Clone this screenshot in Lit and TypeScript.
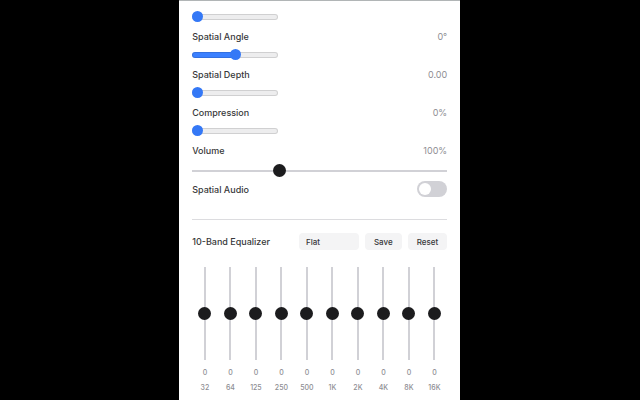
import { LitElement, html, css } from "lit";
import { customElement, property, state } from "lit/decorators.js";

interface Setting {
  id: string;
  label: string;
  min: number;
  max: number;
  step: number;
  value: number;
  format: (v: number) => string;
}

const SETTINGS: Setting[] = [
  { id: "angle", label: "Spatial Angle", min: -180, max: 180, step: 1, value: 0, format: (v) => `${v}°` },
  { id: "depth", label: "Spatial Depth", min: 0, max: 1, step: 0.01, value: 0, format: (v) => v.toFixed(2) },
  { id: "compression", label: "Compression", min: 0, max: 100, step: 1, value: 0, format: (v) => `${v}%` },
];

const BANDS = ["32", "64", "125", "250", "500", "1K", "2K", "4K", "8K", "16K"];

@customElement("blue-slider")
class BlueSlider extends LitElement {
  @property() label = "";
  @property({ type: Number }) min = 0;
  @property({ type: Number }) max = 100;
  @property({ type: Number }) step = 1;
  @property({ type: Number }) value = 0;

  static styles = css`
    :host {
      display: block;
      height: 11px;
    }
    .range {
      appearance: none;
      display: block;
      width: 86px;
      height: 11px;
      margin: 0;
      background: none;
    }
    .range::-webkit-slider-runnable-track {
      height: 6px;
      border-radius: 3px;
      box-shadow: inset 0 0 0 1px rgba(0, 0, 0, 0.12);
      background: linear-gradient(to right, #3b80ff var(--fill), #ededee var(--fill));
    }
    .range::-webkit-slider-thumb {
      appearance: none;
      width: 11px;
      height: 11px;
      margin-top: -3px;
      border-radius: 50%;
      background: #3478f6;
    }
  `;

  private onInput(e: Event) {
    this.value = Number((e.target as HTMLInputElement).value);
    this.dispatchEvent(new CustomEvent("change-value", { detail: this.value }));
  }

  render() {
    const fill = ((this.value - this.min) / (this.max - this.min)) * 100;
    return html`<input
      class="range"
      type="range"
      aria-label=${this.label}
      min=${this.min}
      max=${this.max}
      step=${this.step}
      .value=${String(this.value)}
      style="--fill: ${fill}%"
      @input=${this.onInput}
    />`;
  }
}

@customElement("app-root")
class AppRoot extends LitElement {
  @state() private values: Record<string, number> = Object.fromEntries(SETTINGS.map((s) => [s.id, s.value]));
  @state() private volume = 100;
  @state() private gains: number[] = BANDS.map(() => 0);

  static styles = css`
    :host {
      display: block;
      box-sizing: border-box;
      min-height: 100vh;
      padding: 0 28.1% 0 28%;
      background: #000;
      font-family: Inter, "Liberation Sans", sans-serif;
      font-size: 9px;
      font-weight: 500;
      color: #38383a;
    }
    .panel {
      box-sizing: border-box;
      min-height: 100vh;
      padding: 10px 13px 7px;
      border-top: 1px solid #b1b5b6;
      background: #fff;
    }
    .row {
      display: flex;
      align-items: center;
      justify-content: space-between;
      height: 15px;
      margin: 7px 0 5px;
    }
    .value {
      color: #8e8e93;
      font-weight: 400;
    }
    .volume {
      appearance: none;
      display: block;
      width: 100%;
      height: 13px;
      margin: 6px 0 4px;
      background: linear-gradient(#d1d1d6, #d1d1d6) center / 100% 2px no-repeat;
    }
    .volume::-webkit-slider-thumb,
    .band-range::-webkit-slider-thumb {
      appearance: none;
      width: 13px;
      height: 13px;
      border-radius: 50%;
      background: #1c1c1e;
    }
    .audio {
      display: flex;
      align-items: center;
      justify-content: space-between;
    }
    .switch {
      appearance: none;
      display: flex;
      box-sizing: border-box;
      width: 30px;
      height: 16px;
      margin: 0;
      padding: 2px;
      border-radius: 8px;
      background: #d1d1d6;
    }
    .switch::before {
      content: "";
      width: 12px;
      height: 12px;
      border-radius: 50%;
      background: #fff;
    }
    .switch:checked {
      justify-content: flex-end;
      background: #1c1c1e;
    }
    .divider {
      height: 1px;
      margin: 22px 0 13px;
      border: 0;
      background: #dcdcdf;
    }
    .toolbar {
      display: flex;
      align-items: center;
      gap: 6px;
    }
    .title {
      flex: 1;
      margin: 0;
      font-size: 9px;
      font-weight: 500;
    }
    .preset,
    .button {
      appearance: none;
      box-sizing: border-box;
      height: 17px;
      border: 0;
      border-radius: 4px;
      background: #f4f4f5;
      color: inherit;
      font-family: inherit;
      font-size: 8px;
      font-weight: 500;
    }
    .preset {
      width: 60px;
      padding: 0 7px;
    }
    .button {
      padding: 0 9px;
    }
    .bands {
      display: grid;
      grid-template-columns: repeat(10, 1fr);
      margin-top: 17px;
    }
    .band {
      display: flex;
      flex-direction: column;
      align-items: center;
      color: #8e8e93;
      font-size: 7px;
      font-weight: 500;
      line-height: 10px;
    }
    .band-range {
      appearance: none;
      writing-mode: vertical-lr;
      direction: rtl;
      width: 13px;
      height: 93px;
      margin: 0;
      background: linear-gradient(#d1d1d6, #d1d1d6) center / 2px 100% no-repeat;
    }
    .gain {
      margin: 8px 0 5px;
    }
  `;

  private reset() {
    this.gains = BANDS.map(() => 0);
  }

  private setGain(index: number, e: Event) {
    const gain = Number((e.target as HTMLInputElement).value);
    this.gains = this.gains.map((g, i) => (i === index ? gain : g));
  }

  render() {
    return html`
      <main class="panel">
        <blue-slider label="Reverb"></blue-slider>
        ${SETTINGS.map(
          (s) => html`
            <div class="row">
              <span>${s.label}</span>
              <span class="value">${s.format(this.values[s.id])}</span>
            </div>
            <blue-slider
              .label=${s.label}
              .min=${s.min}
              .max=${s.max}
              .step=${s.step}
              .value=${this.values[s.id]}
              @change-value=${(e: CustomEvent<number>) => (this.values = { ...this.values, [s.id]: e.detail })}
            ></blue-slider>
          `
        )}
        <div class="row">
          <label for="volume">Volume</label>
          <output class="value" for="volume">${this.volume}%</output>
        </div>
        <input
          class="volume"
          id="volume"
          type="range"
          min="0"
          max="300"
          .value=${String(this.volume)}
          @input=${(e: Event) => (this.volume = Number((e.target as HTMLInputElement).value))}
        />
        <div class="audio">
          <label for="spatial">Spatial Audio</label>
          <input class="switch" id="spatial" type="checkbox" role="switch" />
        </div>
        <hr class="divider" />
        <div class="toolbar">
          <h2 class="title">10-Band Equalizer</h2>
          <select class="preset" aria-label="Preset">
            <option>Flat</option>
          </select>
          <button class="button" type="button">Save</button>
          <button class="button" type="button" @click=${this.reset}>Reset</button>
        </div>
        <div class="bands">
          ${BANDS.map(
            (band, i) => html`
              <div class="band">
                <input
                  class="band-range"
                  id="band-${i}"
                  type="range"
                  min="-12"
                  max="12"
                  .value=${String(this.gains[i])}
                  @input=${(e: Event) => this.setGain(i, e)}
                />
                <output class="gain" for="band-${i}">${this.gains[i]}</output>
                <label for="band-${i}">${band}</label>
              </div>
            `
          )}
        </div>
      </main>
    `;
  }
}
